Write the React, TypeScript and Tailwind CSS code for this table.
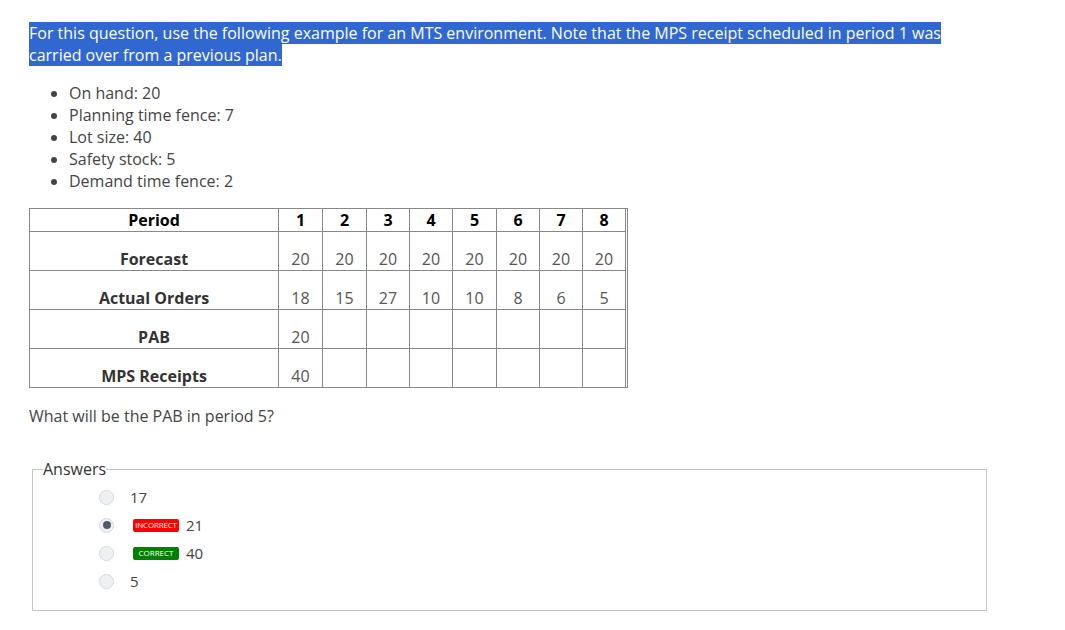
import React from "react";

const periods = [1, 2, 3, 4, 5, 6, 7, 8];
const colW = [44, 44, 43, 43, 44, 43, 43, 43];
const rows: { label: string; vals: (string | number)[] }[] = [
  { label: "Forecast", vals: [20, 20, 20, 20, 20, 20, 20, 20] },
  { label: "Actual Orders", vals: [18, 15, 27, 10, 10, 8, 6, 5] },
  { label: "PAB", vals: [20, "", "", "", "", "", "", ""] },
  { label: "MPS Receipts", vals: [40, "", "", "", "", "", "", ""] },
];

function Radio({ checked }: { checked?: boolean }) {
  return (
    <span className="flex h-[15px] w-[15px] items-center justify-center rounded-full border border-[#d3d8de] bg-[#eef0f3]">
      {checked && <span className="h-[8px] w-[8px] rounded-full bg-[#515c6b]" />}
    </span>
  );
}

export default function App() {
  return (
    <div
      className="min-h-[630px] bg-white pl-[29px] pt-[22px] text-[#333]"
      style={{ fontFamily: '"Open Sans", "Liberation Sans", sans-serif' }}
    >
      <p className="w-[958px] text-[16px] leading-[22px]">
        <span className="bg-[#3167d0] text-white">
          For this question, use the following example for an MTS environment. Note that the MPS receipt scheduled in period 1 was carried over from a previous plan.
        </span>
      </p>
      <ul className="mt-[16px] list-disc pl-[40px] text-[16px] leading-[22px] text-[#444]">
        <li>On hand: 20</li>
        <li>Planning time fence: 7</li>
        <li>Lot size: 40</li>
        <li>Safety stock: 5</li>
        <li>Demand time fence: 2</li>
      </ul>
      <table className="mt-[16px] border-collapse text-[16px] leading-[22px]">
        <tbody>
          <tr className="h-[23px]">
            <td className="w-[249px] border border-[#888] p-0 text-center font-bold text-black">Period</td>
            {periods.map((p, i) => (
              <td
                key={p}
                className="border border-[#888] p-0 text-center font-bold text-black"
                style={{ width: colW[i] }}
              >
                {p}
              </td>
            ))}
            <td rowSpan={5} className="w-[2px] border border-[#888] p-0" />
          </tr>
          {rows.map((r) => (
            <tr key={r.label} className="h-[39px]">
              <td className="border border-[#888] p-0 text-center align-bottom font-bold text-[#333]">{r.label}</td>
              {r.vals.map((v, i) => (
                <td key={i} className="border border-[#888] p-0 text-center align-bottom text-[#555]">
                  {v}
                </td>
              ))}
            </tr>
          ))}
        </tbody>
      </table>
      <p className="mt-[17px] text-[16px] leading-[22px] text-[#444]">What will be the PAB in period 5?</p>
      <fieldset className="ml-[3px] mt-[33px] h-[151px] w-[955px] border border-[#c4c4c4] pl-[10px] pt-[5px]">
        <legend className="p-0 text-[16px] leading-[18px] text-[#333]">Answers</legend>
        <div className="flex flex-col pl-[56px] text-[15px] text-[#444]">
          <div className="flex h-[28px] items-center">
            <Radio />
            <span className="ml-[16px]">17</span>
          </div>
          <div className="flex h-[28px] items-center">
            <Radio checked />
            <span className="ml-[19px] flex h-[13px] w-[46px] items-center justify-center rounded-[2px] bg-[#ff0000] text-[8px] leading-none tracking-[-0.2px] text-white">
              INCORRECT
            </span>
            <span className="ml-[7px]">21</span>
          </div>
          <div className="flex h-[28px] items-center">
            <Radio />
            <span className="ml-[19px] flex h-[13px] w-[46px] items-center justify-center rounded-[2px] bg-[#008000] text-[8px] leading-none text-white">
              CORRECT
            </span>
            <span className="ml-[7px]">40</span>
          </div>
          <div className="flex h-[28px] items-center">
            <Radio />
            <span className="ml-[16px]">5</span>
          </div>
        </div>
      </fieldset>
    </div>
  );
}
